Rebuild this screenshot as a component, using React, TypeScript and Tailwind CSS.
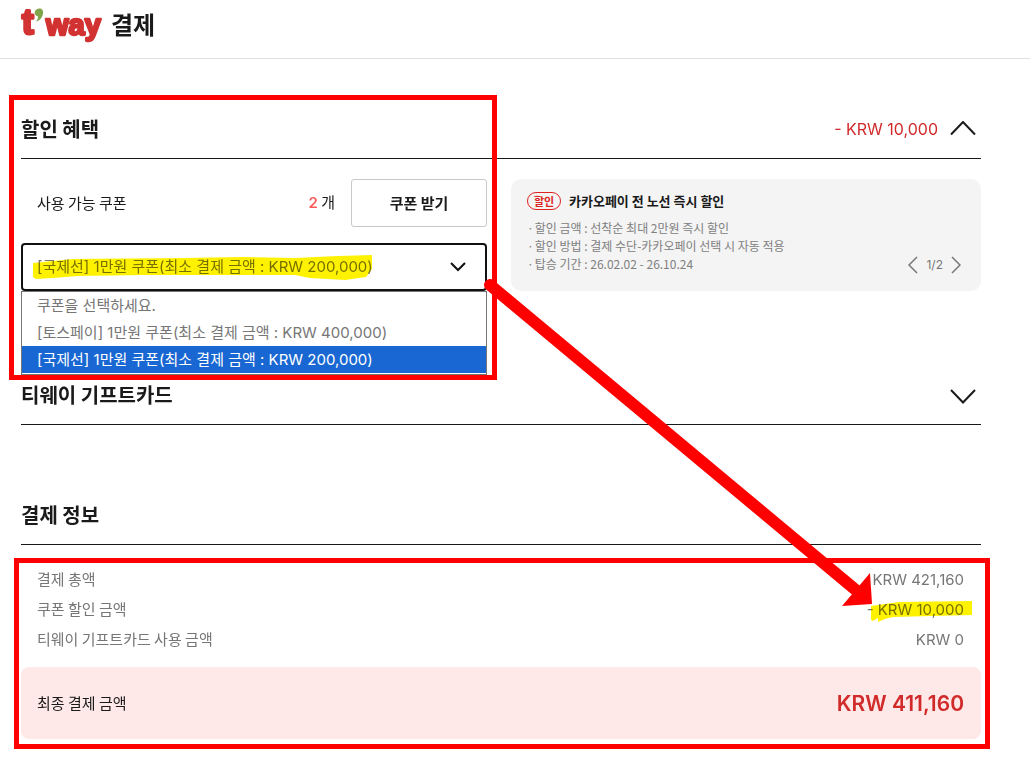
import React, { useState } from "react";

const coupons = [
  "쿠폰을 선택하세요.",
  "[토스페이] 1만원 쿠폰(최소 결제 금액 : KRW 400,000)",
  "[국제선] 1만원 쿠폰(최소 결제 금액 : KRW 200,000)",
];

const promoLines = [
  "할인 금액 : 선착순 최대 2만원 즉시 할인",
  "할인 방법 : 결제 수단-카카오페이 선택 시 자동 적용",
  "탑승 기간 : 26.02.02 - 26.10.24",
];

function Logo() {
  return (
    <svg className="overflow-visible" width="82" height="40" viewBox="0 0 82 40" role="img" aria-label="t'way">
      <g
        fill="#d23232"
        stroke="#d23232"
        strokeLinejoin="round"
        fontFamily="'Liberation Sans', sans-serif"
        fontWeight="700"
      >
        <text x="1" y="26" fontSize="35" strokeWidth="3">t</text>
        <text x="25" y="27" fontSize="29" strokeWidth="2.500">way</text>
      </g>
      <path d="M18 0.5C21 0 22.500 2.500 22 5.500C21.400 9.500 18.800 12.600 15 13.800C16.600 11.600 17.200 10 16.900 8.200C14.800 8 13.600 6.500 13.700 4.500C13.800 2.200 15.600 0.700 18 0.500Z" fill="#7fa548" />
    </svg>
  );
}

function Chevron({ up }: { up?: boolean }) {
  return (
    <svg width="26" height="16" viewBox="0 0 26 16" fill="none" stroke="#1a1a1a" strokeWidth="2">
      <path d={up ? "M1 13.500L13 1L25 13.500" : "M1 1L13 13.500L25 1"} />
    </svg>
  );
}

function SectionHeader({ title, children }: { title: string; children?: React.ReactNode }) {
  return (
    <div className="flex h-15 items-center justify-between border-b border-[#1a1a1a]">
      <h2 className="text-xl font-semibold">{title}</h2>
      {children}
    </div>
  );
}

function CouponSelect() {
  const [selected, setSelected] = useState(2);

  return (
    <div className="relative mt-4 font-['Inter','Noto_Sans_CJK_KR',sans-serif] text-[15px] text-[#767676]">
      <select
        aria-label="쿠폰 선택"
        className="block h-12 w-full appearance-none rounded border-2 border-[#111] bg-white px-3.5 outline-none"
        value={selected}
        onChange={(e) => setSelected(Number(e.target.value))}
      >
        {coupons.map((c, i) => (
          <option key={c} value={i}>{c}</option>
        ))}
      </select>
      <svg className="pointer-events-none absolute top-[18px] right-5" width="18" height="12" viewBox="0 0 18 12" fill="none" stroke="#111" strokeWidth="2">
        <path d="M2 2L9 9L16 2" />
      </svg>
      {/* highlighter over the chosen coupon */}
      <svg className="pointer-events-none absolute top-3 left-3 mix-blend-multiply" width="340" height="26" viewBox="0 0 340 26" fill="#fff200">
        <path d="M0 8L40 4L150 3L210 2L262 3L305 1L339 0V14L333 22L312 25L277 23L262 20L200 20L110 20L45 21L20 23L3 24L0 22Z" />
      </svg>
      <ul role="listbox" className="absolute top-full left-0 w-full border border-[#767676] bg-white pb-px">
        {coupons.map((c, i) => (
          <li key={c} role="option" aria-selected={i === selected}>
            <button
              className={
                i === selected
                  ? "block h-[27px] w-full bg-[#1967d2] px-[15px] pt-0.5 text-left whitespace-nowrap text-white"
                  : "block h-[27px] w-full px-[15px] pt-0.5 text-left whitespace-nowrap"
              }
              onClick={() => setSelected(i)}
            >
              {c}
            </button>
          </li>
        ))}
      </ul>
    </div>
  );
}

function PromoCard() {
  return (
    <div className="relative rounded-[10px] bg-[#f4f4f4] px-4 pt-3">
      <div className="flex items-center gap-2">
        <span className="flex h-[18px] w-[34px] items-center justify-center rounded-full border border-[#d22] text-[11px] font-semibold text-[#d22]">
          할인
        </span>
        <h3 className="text-[13px] font-semibold">카카오페이 전 노선 즉시 할인</h3>
      </div>
      <ul className="mt-2 text-xs leading-[18px] text-[#808080]">
        {promoLines.map((line) => (
          <li key={line} className="flex gap-px">
            <span>·</span>
            {line}
          </li>
        ))}
      </ul>
      <div className="absolute right-5 bottom-[17px] flex items-center gap-2 font-['Inter',sans-serif] text-xs text-[#767676]">
        <button aria-label="이전">
          <svg width="10" height="18" viewBox="0 0 10 18" fill="none" stroke="currentColor" strokeWidth="1.500">
            <path d="M9 1L1 9L9 17" />
          </svg>
        </button>
        <span>1/2</span>
        <button aria-label="다음">
          <svg width="10" height="18" viewBox="0 0 10 18" fill="none" stroke="currentColor" strokeWidth="1.500">
            <path d="M1 1L9 9L1 17" />
          </svg>
        </button>
      </div>
    </div>
  );
}

function PriceRow({ label, value, marked }: { label: string; value: string; marked?: boolean }) {
  return (
    <div className="flex h-[30px] items-center justify-between pr-[17px] pl-4">
      <dt>{label}</dt>
      <dd className="relative pt-0.5 font-['Inter',sans-serif]">
        {value}
        {marked && (
          <svg className="absolute top-1/2 -right-[9px] -mt-2 mix-blend-multiply" width="102" height="21" viewBox="0 0 102 21" fill="#fff200">
            <path d="M0 5L28 1L101 0V14L60 15L22 16L14 18L7 21V17L2 20L0 19Z" />
          </svg>
        )}
      </dd>
    </div>
  );
}

export default function App() {
  const [open, setOpen] = useState(true);

  return (
    <div className="relative min-h-screen bg-white pb-5 font-['Noto_Sans_CJK_KR',sans-serif] text-[#1a1a1a]">
      <header className="flex h-[59px] items-start gap-2 border-b border-[#e0e0e0] pt-2 pl-[21px]">
        <Logo />
        <h1 className="text-2xl font-semibold">결제</h1>
      </header>

      <main className="mt-10 pr-[49px] pl-[21px]">
        <section className="relative">
          <SectionHeader title="할인 혜택">
            <div className="flex items-center gap-3 pr-[5px]">
              <span className="font-['Inter',sans-serif] text-base text-[#d12a2a]">- KRW 10,000</span>
              <button aria-label="할인 혜택 접기" onClick={() => setOpen(!open)}>
                <Chevron up={open} />
              </button>
            </div>
          </SectionHeader>
          {open && (
            <div className="grid grid-cols-[466fr_470fr] gap-6 pt-5">
              <div>
                <div className="flex h-12 items-center pl-4 text-[15px]">
                  <span>사용 가능 쿠폰</span>
                  <span className="ml-auto">
                    <b className="font-['Inter',sans-serif] font-semibold text-[#ff5a5a]">2</b> 개
                  </span>
                  <button className="ml-4 h-12 w-[136px] rounded-[3px] border border-[#c8c8c8] font-semibold">쿠폰 받기</button>
                </div>
                <CouponSelect />
              </div>
              <PromoCard />
            </div>
          )}
          <div className="pointer-events-none absolute -top-1 -left-3 h-[285px] w-[488px] border-5 border-[#f00]" />
        </section>

        <section className="mt-[74px]">
          <SectionHeader title="티웨이 기프트카드">
            <button className="pt-1 pr-[5px]" aria-label="티웨이 기프트카드 펼치기">
              <Chevron />
            </button>
          </SectionHeader>
        </section>

        <section className="mt-15">
          <SectionHeader title="결제 정보" />
          <dl className="relative pt-[19px] text-[15px] text-[#767676]">
            <PriceRow label="결제 총액" value="KRW 421,160" />
            <PriceRow label="쿠폰 할인 금액" value="- KRW 10,000" marked />
            <PriceRow label="티웨이 기프트카드 사용 금액" value="KRW 0" />
            <div className="mt-[13px] flex h-18 items-center justify-between rounded-lg bg-[#ffe8e8] pr-[17px] pl-4">
              <dt className="text-[#1a1a1a]">최종 결제 금액</dt>
              <dd className="pt-0.5 font-['Inter',sans-serif] text-[21px] font-semibold text-[#d12a2a]">KRW 411,160</dd>
            </div>
            <div className="pointer-events-none absolute top-[13px] -right-[9px] -bottom-2.5 -left-[7px] border-5 border-[#f00]" />
          </dl>
        </section>
      </main>

      {/* arrow from the coupon box to the discount line */}
      <svg className="pointer-events-none absolute top-[278px] left-[483px]" width="392" height="330" viewBox="0 0 392 330" fill="#f00">
        <path d="M7 7L374 313" stroke="#f00" strokeWidth="12" strokeLinecap="round" />
        <path d="M387 295L389 326L359 328Z" />
      </svg>
    </div>
  );
}
